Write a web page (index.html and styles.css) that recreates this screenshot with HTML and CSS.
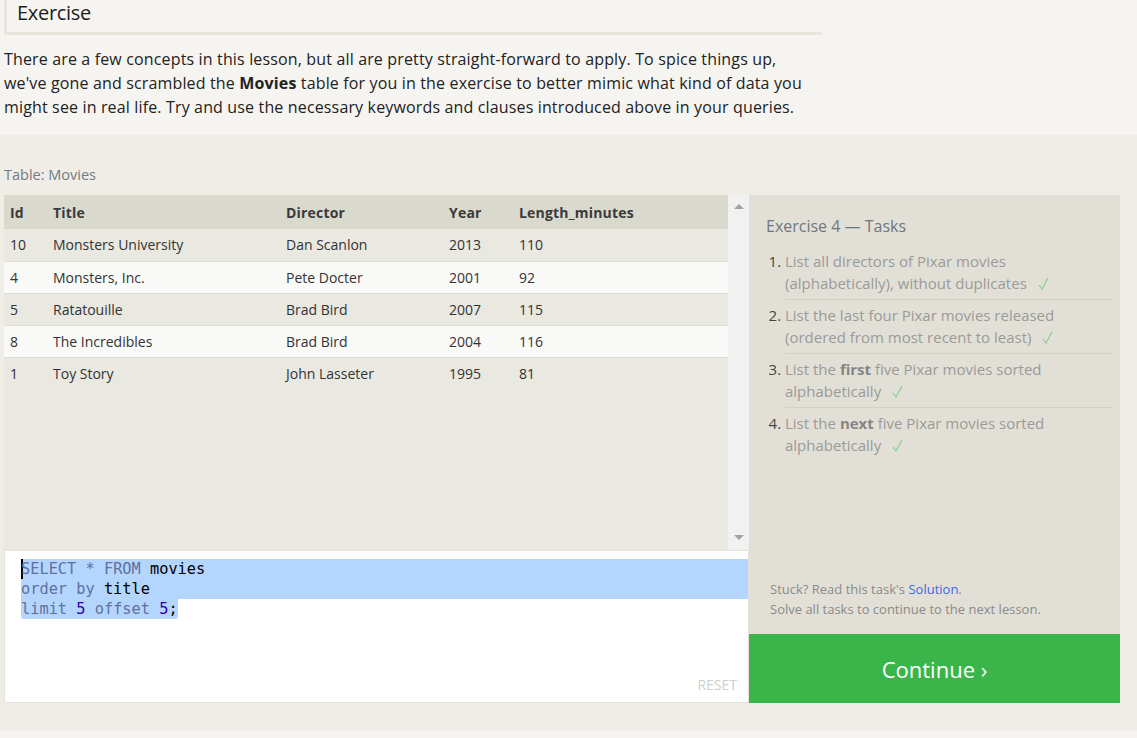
FILE: index.html
```html
<!DOCTYPE html>
<html lang="en">
<head>
<meta charset="utf-8">
<title>Exercise</title>
<link rel="stylesheet" href="styles.css">
</head>
<body>
<div class="intro">
  <h2 class="ex-head">Exercise</h2>
  <p class="lead">There are a few concepts in this lesson, but all are pretty straight-forward to apply. To spice things up, we've gone and scrambled the <strong>Movies</strong> table for you in the exercise to better mimic what kind of data you might see in real life. Try and use the necessary keywords and clauses introduced above in your queries.</p>
</div>
<section class="workspace">
  <div class="table-label">Table: Movies</div>
  <div class="grid">
    <div class="left">
      <div class="table-wrap">
        <div class="table-scroll">
          <table class="movies">
            <thead>
              <tr><th class="c-id">Id</th><th class="c-title">Title</th><th class="c-dir">Director</th><th class="c-year">Year</th><th>Length_minutes</th></tr>
            </thead>
            <tbody>
              <tr><td>10</td><td>Monsters University</td><td>Dan Scanlon</td><td>2013</td><td>110</td></tr>
              <tr><td>4</td><td>Monsters, Inc.</td><td>Pete Docter</td><td>2001</td><td>92</td></tr>
              <tr><td>5</td><td>Ratatouille</td><td>Brad Bird</td><td>2007</td><td>115</td></tr>
              <tr><td>8</td><td>The Incredibles</td><td>Brad Bird</td><td>2004</td><td>116</td></tr>
              <tr><td>1</td><td>Toy Story</td><td>John Lasseter</td><td>1995</td><td>81</td></tr>
            </tbody>
          </table>
        </div>
        <div class="scrollbar"><span class="arrow up"></span><span class="arrow down"></span></div>
      </div>
      <div class="editor">
        <div class="code">
          <div class="line sel"><span class="cursor"></span><span class="kw">SELECT</span> <span class="kw">*</span> <span class="kw">FROM</span> movies</div>
          <div class="line sel"><span class="kw">order</span> <span class="kw">by</span> title</div>
          <div class="line"><span class="sel-part"><span class="kw">limit</span> <span class="num">5</span> <span class="kw">offset</span> <span class="num">5</span>;</span></div>
        </div>
        <div class="reset">RESET</div>
      </div>
    </div>
    <div class="right">
      <div class="tasks">
        <h3 class="tasks-title">Exercise 4 — Tasks</h3>
        <ol class="task-list">
          <li>List all directors of Pixar movies (alphabetically), without duplicates <svg class="check" width="11" height="13" viewBox="0 0 11 13"><polyline points="1,8 4,12 10,1" fill="none" stroke="#86cf92" stroke-width="1.2"/></svg></li>
          <li>List the last four Pixar movies released (ordered from most recent to least) <svg class="check" width="11" height="13" viewBox="0 0 11 13"><polyline points="1,8 4,12 10,1" fill="none" stroke="#86cf92" stroke-width="1.2"/></svg></li>
          <li>List the <b>first</b> five Pixar movies sorted alphabetically <svg class="check" width="11" height="13" viewBox="0 0 11 13"><polyline points="1,8 4,12 10,1" fill="none" stroke="#86cf92" stroke-width="1.2"/></svg></li>
          <li>List the <b>next</b> five Pixar movies sorted alphabetically <svg class="check" width="11" height="13" viewBox="0 0 11 13"><polyline points="1,8 4,12 10,1" fill="none" stroke="#86cf92" stroke-width="1.2"/></svg></li>
        </ol>
        <div class="stuck">Stuck? Read this task's <a class="solution" href="#">Solution</a>.<br>Solve all tasks to continue to the next lesson.</div>
      </div>
      <div class="continue">Continue ›</div>
    </div>
  </div>
</section>
</body>
</html>
```
FILE: styles.css
```css
* { box-sizing: border-box; }
html, body { margin: 0; padding: 0; }
body {
  background: #f5f4f0;
  font-family: "Open Sans", "Noto Sans", "DejaVu Sans", sans-serif;
  color: #222;
  width: 1137px;
  height: 738px;
  overflow: hidden;
}
.intro { padding-left: 4px; width: 822px; }
.ex-head {
  margin: 0;
  height: 35px;
  padding: 0 0 0 10px;
  font-size: 20px;
  font-weight: 400;
  line-height: 26px;
  letter-spacing: -0.3px;
  color: #1c1c1c;
  border-left: 3px solid #e8e6dc;
  border-bottom: 3px solid #e8e6dc;
}
.lead {
  margin: 12px 0 0;
  max-width: 810px;
  font-size: 16px;
  line-height: 24px;
  letter-spacing: 0.15px;
  color: #222;
}
.lead strong { font-weight: 700; }

.workspace {
  margin-top: 16px;
  background: #efede6;
  height: 595px;
  padding: 30px 17px 27px 4px;
}
.table-label {
  font-size: 14.5px;
  line-height: 20px;
  color: #737a82;
  margin-bottom: 10px;
}
.grid {
  display: grid;
  grid-template-columns: 745px 371px;
}
.left { display: flex; flex-direction: column; }
.table-wrap {
  display: flex;
  height: 355px;
  background: #e9e8e1;
}
.table-scroll { flex: 1; }
.scrollbar {
  width: 21px;
  background: #f1f1f1;
  display: flex;
  flex-direction: column;
  justify-content: space-between;
  align-items: center;
  padding: 9px 0 10px;
}
.arrow { width: 0; height: 0; border-left: 5px solid transparent; border-right: 5px solid transparent; }
.arrow.up { border-bottom: 5px solid #a3a3a3; }
.arrow.down { border-top: 5px solid #a3a3a3; }

.movies {
  width: 100%;
  border-collapse: collapse;
  font-size: 14px;
  color: #333;
}
.movies th {
  text-align: left;
  height: 34px;
  padding: 0 6px;
  background: #dad9ce;
  font-weight: 700;
  color: #3a3a3a;
  letter-spacing: 0.2px;
}
.movies td {
  height: 32px;
  padding: 0 6px;
  border-top: 1px solid #dddcd5;
}
.movies tbody tr:first-child td { border-top: none; }
.movies tbody tr:nth-child(even) td { background: #f9f9f8; }
.c-id { width: 43px; }
.c-title { width: 233px; }
.c-dir { width: 163px; }
.c-year { width: 70px; }

.editor {
  height: 153px;
  background: #fff;
  border: 1px solid #e4e2da;
  display: flex;
  flex-direction: column;
  padding: 8px 0 8px 0;
}
.code {
  font-family: "DejaVu Sans Mono", "Liberation Mono", monospace;
  font-size: 15.3px;
  line-height: 20px;
  color: #000;
}
.line { padding-left: 16px; height: 20px; white-space: pre; }
.line.sel { background: #b4d5fe; margin-left: 16px; padding-left: 0; }
.sel-part { background: #b4d5fe; display: inline-block; height: 20px; border-radius: 0 0 3px 3px; }
.cursor {
  display: inline-block;
  width: 2px;
  height: 20px;
  background: #000;
  margin-right: -2px;
  vertical-align: top;
}
.kw { color: #60719f; }
.num { color: #3300aa; }
.reset {
  margin-top: auto;
  align-self: flex-end;
  padding-right: 11px;
  font-size: 14px;
  line-height: 18px;
  color: #cfcfcf;
}

.right { display: flex; flex-direction: column; }
.tasks {
  flex: 1;
  background: #e2e0d6;
  padding: 20px 8px 15px 17px;
  display: flex;
  flex-direction: column;
}
.tasks-title {
  margin: 0;
  font-size: 16px;
  font-weight: 400;
  line-height: 22px;
  color: #6e7780;
}
.task-list {
  margin: 13px 0 0;
  padding-left: 19px;
  font-size: 15px;
  line-height: 22px;
  color: #9a9a9a;
}
.task-list li {
  padding: 4px 20px 5px 0;
  border-bottom: 1px solid #d3d1c7;
}
.task-list li:first-child { padding-top: 0; }
.task-list li:last-child { border-bottom: none; }
.task-list li::marker { color: #444; }
.task-list b { color: #858585; font-weight: 700; }
.check { margin-left: 7px; vertical-align: -1px; }
.stuck {
  margin-top: auto;
  margin-left: 4px;
  font-size: 13px;
  line-height: 20px;
  color: #8a8a8a;
}
.solution { color: #3a6bd8; text-decoration: none; }
.continue {
  height: 69px;
  background: #3ab54a;
  color: #fff;
  font-size: 22px;
  display: flex;
  align-items: center;
  justify-content: center;
}
```
